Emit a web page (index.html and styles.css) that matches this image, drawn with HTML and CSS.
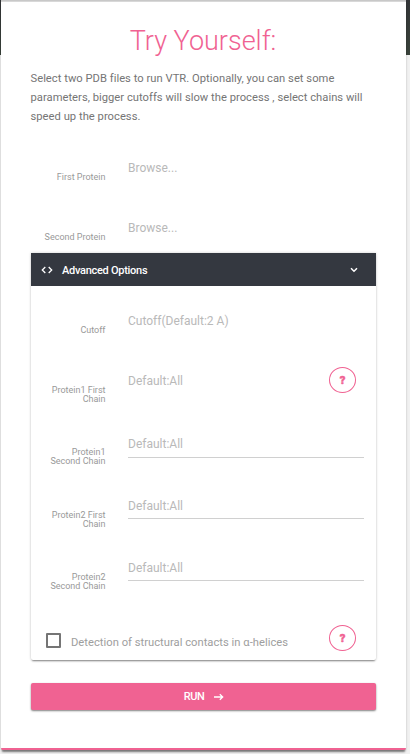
FILE: index.html
```html
<!DOCTYPE html>
<html lang="en">
<head>
<meta charset="utf-8">
<title>Try Yourself</title>
<link rel="stylesheet" href="styles.css">
</head>
<body>
<main class="card">
  <h1>Try Yourself:</h1>
  <p class="intro">Select two PDB files to run VTR. Optionally, you can set some parameters, bigger cutoffs will slow the process , select chains will speed up the process.</p>
  <div class="files">
    <div class="field"><span class="label">First Protein</span><span class="value">Browse...</span></div>
    <div class="field"><span class="label">Second Protein</span><span class="value">Browse...</span></div>
  </div>
  <section class="panel">
    <header class="panel-head">
      <svg class="code" width="12" height="8" viewBox="0 0 12 8"><path d="M4.3 1 1.3 4l3 3M7.7 1l3 3-3 3"/></svg>
      <span class="panel-title">Advanced Options</span>
      <svg class="chevron" width="8" height="6" viewBox="0 0 8 6"><path d="M1 1.2l3 3 3-3"/></svg>
    </header>
    <div class="options">
      <div class="field"><span class="label">Cutoff</span><span class="value">Cutoff(Default:2 A)</span></div>
      <div class="field"><span class="label">Protein1 First Chain</span><span class="value">Default:All</span><span class="help">?</span></div>
      <div class="field wide"><span class="label">Protein1 Second Chain</span><span class="value lined">Default:All</span></div>
      <div class="field wide"><span class="label">Protein2 First Chain</span><span class="value lined short">Default:All</span></div>
      <div class="field wide"><span class="label">Protein2 Second Chain</span><span class="value lined short">Default:All</span></div>
    </div>
    <div class="check">
      <span class="box"></span>
      <span class="check-text">Detection of structural contacts in α-helices</span>
      <span class="help">?</span>
    </div>
  </section>
  <div class="run"><span>RUN</span><svg width="10" height="8" viewBox="0 0 10 8"><path d="M0 4h8.5M5.8 1.2 8.7 4 5.8 6.8"/></svg></div>
</main>
</body>
</html>
```
FILE: styles.css
```css
* { box-sizing: border-box; }
body {
  margin: 0;
  height: 754px;
  overflow: hidden;
  background: linear-gradient(#343638, #3a433b 55px, #f1f1f1 55px);
  font-family: Roboto, sans-serif;
}
.card {
  width: 405px;
  height: 750px;
  margin-left: 1px;
  padding: 23px 30px 0;
  background: #fff;
  border-top: 1px solid #c8c8c8;
  border-bottom: 2px solid #f06292;
  border-radius: 0 0 2px 2px;
  box-shadow: inset 0 1px 0 #d8d8d8, 0 3px 2px -1px rgba(0,0,0,.45), 0 1px 3px rgba(0,0,0,.15);
}
h1 {
  margin: 0 1px 0 0;
  text-align: center;
  color: #f06292;
  font-size: 27px;
  font-weight: 300;
  line-height: 34px;
}
.intro {
  margin: 11px -5px 0 -.5px;
  height: 89px;
  color: #757575;
  font-size: 11.2px;
  line-height: 19px;
  letter-spacing: .025px;
}
.field {
  display: grid;
  grid-template-columns: 75px 1fr auto;
  column-gap: 22px;
  align-items: start;
}
.wide { grid-template-columns: 75px 1fr; }
.files { height: 95px; }
.files .field { height: 60px; }
.label {
  padding: 15px 0 0 15px;
  margin-right: .5px;
  color: #999;
  font-size: 9px;
  line-height: 9px;
  text-align: right;
}
.files .label { padding-left: 0; }
.value {
  color: #b9b9b9;
  font-size: 12px;
  line-height: 20px;
}
.panel {
  height: 407px;
  background: #fff;
  border-radius: 0 0 2px 2px;
  box-shadow: 0 2px 2px -1px rgba(0,0,0,.45), 0 0 3px rgba(0,0,0,.2);
}
.panel-head {
  display: flex;
  align-items: center;
  height: 33px;
  padding: 0 18px 0 10px;
  background: #343840;
  color: #fff;
}
svg { fill: none; stroke: #fff; stroke-width: 1.3; }
.panel-title {
  flex: 1;
  margin-left: 9px;
  padding-top: 2px;
  font-size: 11px;
  font-weight: 500;
  letter-spacing: -.28px;
}
.chevron { stroke-width: 1.5; }
.options {
  display: grid;
  grid-template-rows: 60px 63px 62px 62px 62px;
  padding: 25px 12px 0 0;
}
.options .field:nth-child(3) .label { padding-top: 14px; }
.lined {
  height: 24px;
  border-bottom: 1px solid #d0d0d0;
}
.short { height: 23px; }
.help {
  display: grid;
  place-items: center;
  width: 27px;
  height: 26px;
  border: 1px solid #f06292;
  border-radius: 50%;
  color: #f06292;
  font-size: 11px;
  font-weight: 900;
  -webkit-text-stroke: .5px #f06292;
}
.field .help { margin: -4px 8px 0 0; }
.check {
  display: flex;
  align-items: center;
  height: 26px;
  margin-top: 5px;
  padding: 0 20px 0 15px;
}
.box {
  width: 15px;
  height: 15px;
  margin-top: 5px;
  border: 2px solid #757575;
  border-radius: 1px;
}
.check-text {
  flex: 1;
  margin-left: 10px;
  padding-top: 9px;
  color: #9e9e9e;
  font-size: 11.2px;
  letter-spacing: .02px;
  white-space: nowrap;
}
.run {
  display: flex;
  align-items: center;
  justify-content: center;
  gap: 10px;
  height: 27px;
  margin-top: 23px;
  padding-left: 1px;
  border-radius: 2px;
  background: #f06292;
  box-shadow: 0 1px 2px rgba(0,0,0,.5);
  color: #fff;
  font-size: 11px;
  font-weight: 500;
  letter-spacing: -.4px;
}
```
